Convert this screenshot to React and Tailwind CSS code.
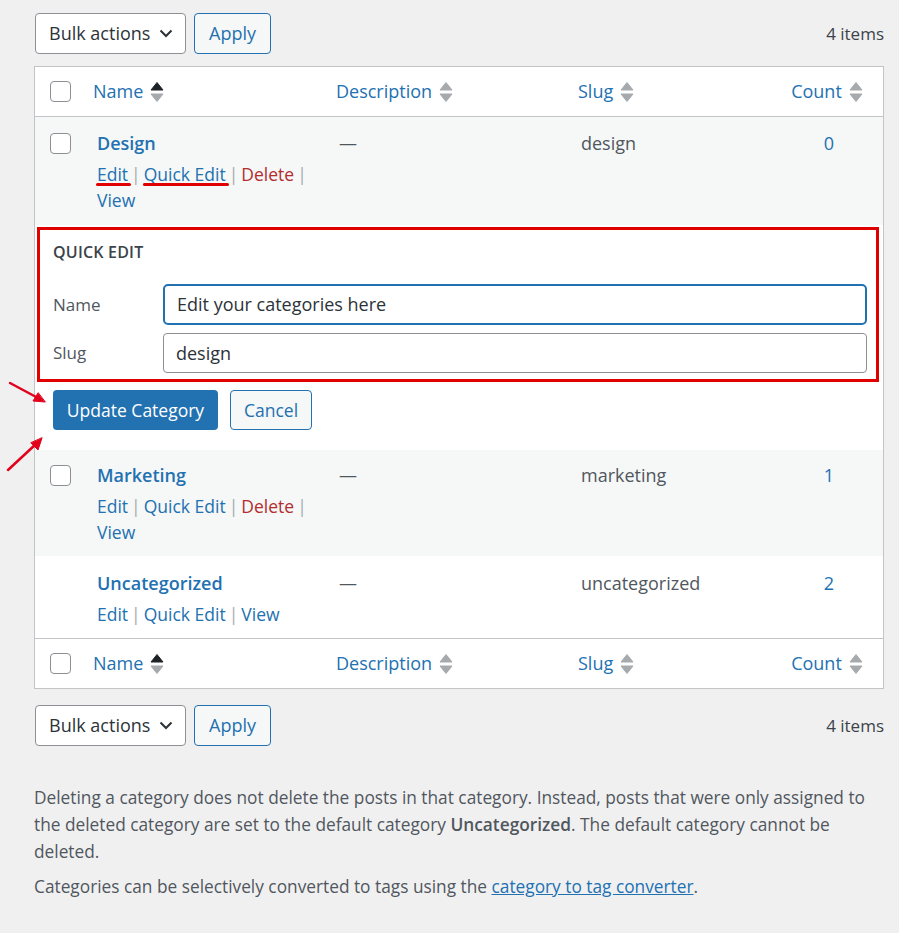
import { Fragment } from "react";

const blue = "text-[#2271b1]";

function SortArrows({ active }) {
  return (
    <svg width="14" height="22" viewBox="0 0 14 22" className="ml-[7px] shrink-0">
      <path d="M7 1.5 L13 9 L1 9 Z" fill={active ? "#1d2327" : "#a7aaad"} strokeLinejoin="round" stroke={active ? "#1d2327" : "#a7aaad"} strokeWidth="1" />
      <path d="M1 13 L13 13 L7 20.5 Z" fill="#a7aaad" strokeLinejoin="round" stroke="#a7aaad" strokeWidth="1" />
    </svg>
  );
}

function Checkbox() {
  return <span className="block w-[21px] h-[21px] rounded-[4px] border border-[#8c8f94] bg-white" />;
}

function TableNav() {
  return (
    <div className="flex items-center justify-between">
      <div className="flex items-center gap-[8px] pl-px">
        <div className="flex items-center justify-between w-[151px] h-[41px] pl-[13px] pr-[12px] bg-white border border-[#8c8f94] rounded-[4px] text-[18px] text-[#2c3338]">
          <span>Bulk actions</span>
          <svg width="14" height="9" viewBox="0 0 14 9">
            <path d="M1.5 1.5 L7 7 L12.5 1.5" fill="none" stroke="#2c3338" strokeWidth="2" />
          </svg>
        </div>
        <button className="w-[77px] h-[41px] border border-[#2271b1] rounded-[4px] bg-[#f6f7f7] text-[18px] text-[#2271b1]">
          Apply
        </button>
      </div>
      <span className="text-[17px] text-[#3c434a]">4 items</span>
    </div>
  );
}

function HeaderRow({ top }) {
  return (
    <div className={`flex items-center h-[50px] bg-white ${top ? "border-b" : "border-t"} border-[#c3c4c7]`}>
      <div className="w-[51px] pl-[15px]">
        <Checkbox />
      </div>
      <div className="w-[245px] pl-[7px] flex items-center">
        <span className={`text-[18px] ${blue}`}>Name</span>
        <SortArrows active />
      </div>
      <div className="w-[242px] pl-[5px] flex items-center">
        <span className={`text-[18px] ${blue}`}>Description</span>
        <SortArrows />
      </div>
      <div className="w-[208px] pl-[5px] flex items-center">
        <span className={`text-[18px] ${blue}`}>Slug</span>
        <SortArrows />
      </div>
      <div className="flex-1 flex items-center justify-center pr-[10px]">
        <span className={`text-[18px] ${blue}`}>Count</span>
        <SortArrows />
      </div>
    </div>
  );
}

function Sep() {
  return <span className="text-[#a7aaad] mx-[3px]">|</span>;
}

function Marked({ children }) {
  return (
    <span className="relative">
      <span className="underline underline-offset-[2px]">{children}</span>
      <span className="absolute left-[-1px] right-[-3px] bottom-[0px] h-[3px] rounded-full bg-[#e00000]" />
    </span>
  );
}

function CategoryRow({ name, slug, count, canDelete, striped, marked, pad }) {
  return (
    <div className={`flex ${striped ? "bg-[#f6f7f7]" : "bg-white"} ${pad}`}>
      <div className="w-[51px] pl-[15px] pt-[3px]">{canDelete && <Checkbox />}</div>
      <div className="w-[245px] pl-[11px]">
        <div className={`text-[18px] leading-[26px] font-semibold ${blue}`}>{name}</div>
        <div className={`mt-[5px] text-[17.5px] leading-[26px] ${blue}`}>
          {marked ? <Marked>Edit</Marked> : <span>Edit</span>}
          <Sep />
          {marked ? <Marked>Quick Edit</Marked> : <span>Quick Edit</span>}
          <Sep />
          {canDelete ? (
            <Fragment>
              <span className="text-[#b32d2e]">Delete</span>
              <Sep />
              <br />
              <span>View</span>
            </Fragment>
          ) : (
            <span>View</span>
          )}
        </div>
      </div>
      <div className="w-[242px] pl-[8px] text-[18px] leading-[26px] text-[#50575e]">—</div>
      <div className="w-[208px] pl-[8px] text-[18px] leading-[26px] text-[#50575e]">{slug}</div>
      <div className={`flex-1 text-center pr-[6px] text-[18px] leading-[26px] ${blue}`}>{count}</div>
    </div>
  );
}

function QuickEditRow() {
  return (
    <div className="bg-white pt-[2px] pb-[20px]">
      <div className="ml-[2px] mr-[4px] border-[3px] border-[#e00000] pl-[13px] pr-[9px] pt-[11px] pb-[6px]">
        <div className="text-[16px] leading-[22px] font-semibold text-[#3c434a] tracking-[0.2px]">QUICK EDIT</div>
        <div className="mt-[21px] flex items-center">
          <span className="w-[110px] text-[17px] text-[#50575e]">Name</span>
          <div className="flex-1 h-[41px] flex items-center px-[12px] border-2 border-[#2271b1] rounded-[5px] text-[18px] text-[#2c3338]">
            Edit your categories here
          </div>
        </div>
        <div className="mt-[8px] flex items-center">
          <span className="w-[110px] text-[17px] text-[#50575e]">Slug</span>
          <div className="flex-1 h-[40px] flex items-center px-[12px] border border-[#8c8f94] rounded-[4px] text-[18px] text-[#2c3338]">
            design
          </div>
        </div>
      </div>
      <div className="mt-[8px] pl-[18px] flex gap-[12px]">
        <button className="w-[165px] h-[40px] rounded-[4px] bg-[#2271b1] text-white text-[17.5px]">Update Category</button>
        <button className="w-[82px] h-[40px] rounded-[4px] border border-[#2271b1] bg-[#f6f7f7] text-[#2271b1] text-[17.5px]">
          Cancel
        </button>
      </div>
    </div>
  );
}

function Annotations() {
  return (
    <svg className="absolute left-0 top-0 pointer-events-none" width="899" height="933">
      <g stroke="#e3001b" strokeWidth="2.5" strokeLinecap="round" fill="#e3001b">
        <line x1="10" y1="383" x2="38" y2="398" />
        <path d="M45 402 L33 401 L38 393 Z" strokeWidth="1" />
        <line x1="8" y1="470" x2="36" y2="444" />
        <path d="M42 438 L38 450 L31 443 Z" strokeWidth="1" />
      </g>
    </svg>
  );
}

export default function App() {
  return (
    <div className="relative min-h-[933px] bg-[#f0f0f1] pl-[34px] pr-[15px] pt-[13px] font-['Open_Sans',sans-serif]">
      <TableNav />
      <div className="mt-[12px] border border-[#c3c4c7] bg-white">
        <HeaderRow top />
        <CategoryRow name="Design" slug="design" count="0" canDelete striped marked pad="pt-[13px] pb-[12px]" />
        <QuickEditRow />
        <CategoryRow name="Marketing" slug="marketing" count="1" canDelete striped pad="pt-[12px] pb-[11px]" />
        <CategoryRow name="Uncategorized" slug="uncategorized" count="2" pad="pt-[14px] pb-[11px]" />
        <HeaderRow />
      </div>
      <div className="mt-[16px]">
        <TableNav />
      </div>
      <div className="mt-[38px] text-[17.3px] leading-[27px] text-[#50575e]">
        <p>
          Deleting a category does not delete the posts in that category. Instead, posts that were only assigned to the
          deleted category are set to the default category <strong className="font-semibold">Uncategorized</strong>. The
          default category cannot be deleted.
        </p>
        <p className="mt-[8px]">
          Categories can be selectively converted to tags using the{" "}
          <span className="text-[#2271b1] underline">category to tag converter</span>.
        </p>
      </div>
      <Annotations />
    </div>
  );
}
